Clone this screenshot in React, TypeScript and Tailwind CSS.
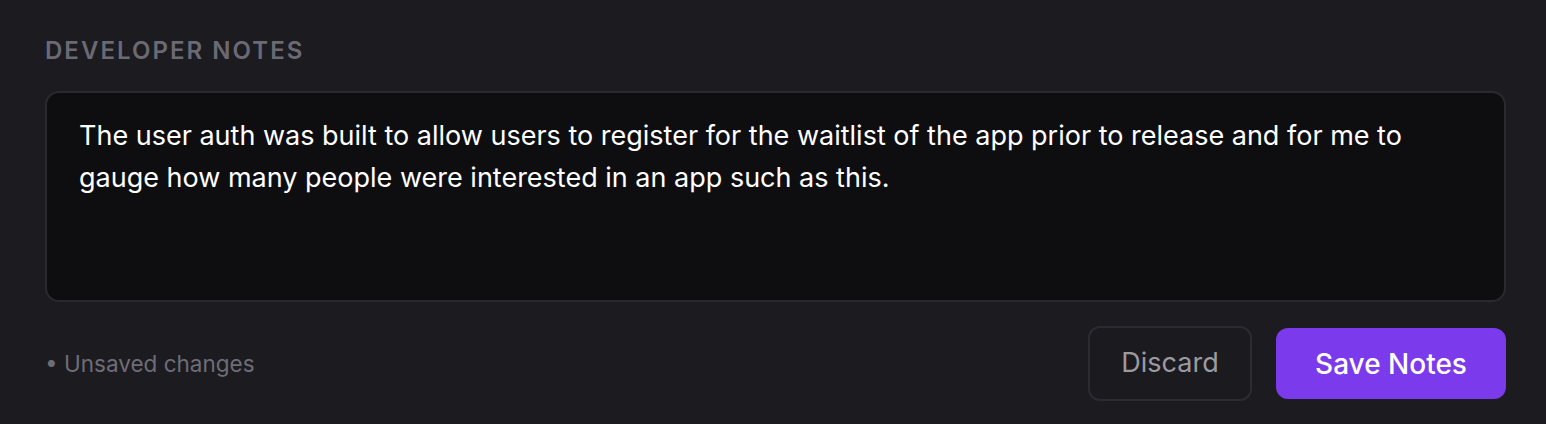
export default function App() {
  return (
    <div
      className="h-[424px] w-full bg-[#1c1b20] pl-[45px] pr-[40px] pt-[35px]"
      style={{ fontFamily: "Inter, 'Liberation Sans', sans-serif" }}
    >
      <h2 className="text-[24px] leading-[32px] font-semibold tracking-[0.085em] text-[#6b6a74]">
        DEVELOPER NOTES
      </h2>

      <div className="mt-[24px] h-[211px] rounded-[14px] border-2 border-[#2a2930] bg-[#0e0e10] px-[32px] pt-[22px]">
        <p className="text-[27px] leading-[42px] text-white">
          The user auth was built to allow users to register for the waitlist of the app prior to
          release and for me to gauge how many people were interested in an app such as this.
        </p>
      </div>

      <div className="mt-[24px] flex items-center justify-between">
        <span className="text-[22.5px] text-[#6e6d77]">• Unsaved changes</span>
        <div className="flex items-center gap-[24px]">
          <button className="h-[75px] w-[164px] rounded-[12px] border-2 border-[#2c2b31] bg-[#1b1a1f] text-[27px] text-[#9b9aa1]">
            Discard
          </button>
          <button className="h-[71px] w-[230px] rounded-[12px] bg-[#7c3aed] text-[28px] font-medium text-white">
            Save Notes
          </button>
        </div>
      </div>
    </div>
  );
}
